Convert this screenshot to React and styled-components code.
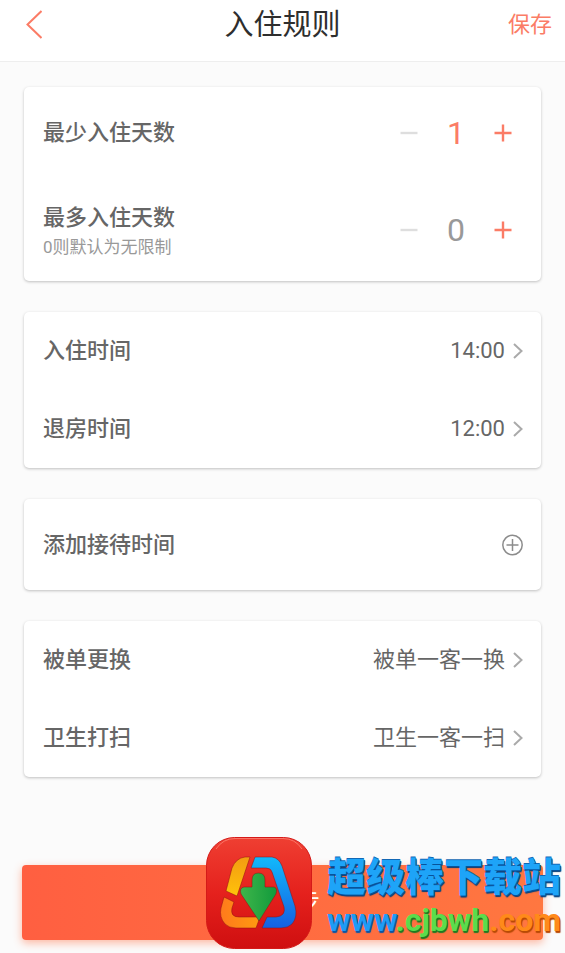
import React, { useState } from 'react';
import styled, { createGlobalStyle, ThemeProvider } from 'styled-components';

const theme = {
  accent: '#fb7c66',
  white: '#ffffff',
  background: '#fbfbfb',
  black: '#2e2e2e',
  text: '#666666',
  grey: '#999999',
  lightGrey: '#dedede',
  line: '#eeeeee',
  font: {
    family: "Roboto, 'Noto Sans CJK SC', sans-serif",
    size: { title: '29px', value: '32px', button: '25px', body: '22px', hint: '17px' },
  },
};

const GlobalStyle = createGlobalStyle`
  *, *::before, *::after {
    box-sizing: border-box;
  }

  body {
    margin: 0;
    background-color: ${theme.background};
  }

  button {
    padding: 0;
    border: 0;
    background: none;
    color: inherit;
    font: inherit;
    cursor: pointer;
  }
`;

const StyledPage = styled.div`
  overflow-x: hidden;
  font-family: ${({ theme }) => theme.font.family};
  font-size: ${({ theme }) => theme.font.size.body};
  line-height: 34px;
  color: ${({ theme }) => theme.text};
`;

const StyledHeader = styled.header`
  display: grid;
  grid-template-columns: 72px 1fr 72px;
  align-items: center;
  padding: 0 13px 11px;
  background-color: ${({ theme }) => theme.white};
  border-bottom: 1px solid ${({ theme }) => theme.line};
`;

const StyledTitle = styled.h1`
  margin: 0;
  font-size: ${({ theme }) => theme.font.size.title};
  font-weight: 400;
  line-height: 50px;
  text-align: center;
  color: ${({ theme }) => theme.black};
`;

const StyledHeaderButton = styled.button`
  display: flex;
  align-items: center;
  justify-content: ${({ $end }) => ($end ? 'flex-end' : 'flex-start')};
  height: 48px;
  color: ${({ theme }) => theme.accent};
`;

const StyledMain = styled.main`
  display: flex;
  flex-direction: column;
  gap: 31px;
  padding: 25px 24px 0;
`;

const StyledCard = styled.section`
  padding: 0 18px 0 19px;
  border-radius: 5px;
  background-color: ${({ theme }) => theme.white};
  box-shadow: 0 1px 3px rgba(0, 0, 0, 0.24);
`;

const StyledRow = styled.div`
  display: flex;
  align-items: center;
  justify-content: space-between;
  min-height: ${({ $size }) => ({ large: '103px', medium: '91px' })[$size] || '78px'};
`;

const StyledRowButton = styled(StyledRow).attrs({ as: 'button', type: 'button' })`
  width: 100%;
  text-align: left;
`;

const StyledLabel = styled.span`
  font-weight: 500;
`;

const StyledHint = styled.p`
  margin: 0;
  font-size: ${({ theme }) => theme.font.size.hint};
  line-height: 24px;
  color: ${({ theme }) => theme.grey};
`;

const StyledValue = styled.span`
  display: flex;
  align-items: center;
  gap: 8px;
`;

const StyledStepper = styled.div`
  display: flex;
  align-items: center;
`;

const StyledStepButton = styled.button`
  display: flex;
  align-items: center;
  justify-content: center;
  width: 40px;
  height: 44px;
  color: ${({ theme }) => theme.accent};

  &:disabled {
    color: ${({ theme }) => theme.lightGrey};
    cursor: default;
  }
`;

const StyledCount = styled.output`
  width: 54px;
  font-size: ${({ theme }) => theme.font.size.value};
  line-height: 44px;
  text-align: center;
  color: ${({ theme, $active }) => ($active ? theme.accent : theme.grey)};
`;

const StyledFooter = styled.footer`
  position: relative;
  margin-top: 88px;
  padding: 0 22px 13px;
`;

const StyledSubmit = styled.button`
  display: block;
  width: 100%;
  height: 75px;
  border-radius: 4px;
  background: linear-gradient(90deg, #ff5f41, #ff7740);
  box-shadow: 0 3px 8px rgba(255, 100, 50, 0.45);
  font-size: ${({ theme }) => theme.font.size.button};
  color: ${({ theme }) => theme.white};
`;

const StyledBadge = styled.div`
  position: absolute;
  top: -28px;
  right: 4px;
  display: flex;
  gap: 15px;
  pointer-events: none;
`;

const StyledBadgeText = styled.div`
  display: flex;
  flex-direction: column;
  padding-top: 14px;
  white-space: nowrap;
`;

const StyledBadgeName = styled.span`
  font-family: 'Noto Sans CJK SC', sans-serif;
  font-size: 39px;
  font-weight: 900;
  line-height: 46px;
  color: #1ea4f8;
  text-shadow: 1px 1px 0 #07539c, 0 -1px 0 #1268b5, 1px 2px 1px #063d76;
`;

const StyledBadgeUrl = styled.span`
  font-size: 32px;
  font-weight: 700;
  line-height: 46px;
`;

const StyledUrlPart = styled.span`
  color: ${({ $color }) => $color};
  text-shadow: 1px 1px 0 ${({ $edge }) => $edge}, 1px 2px 1px ${({ $edge }) => $edge};
`;

const ChevronIcon = () => (
  <svg width="10" height="16" viewBox="0 0 10 16" fill="none" stroke="#aaaaaa" strokeWidth="2">
    <path d="M1 1L8.5 8L1 15" />
  </svg>
);

const BackIcon = () => (
  <svg width="29" height="30" viewBox="0 0 29 30" fill="none" stroke="currentColor" strokeWidth="2">
    <path d="M28.5 1L14.5 14.5L28.5 28" />
  </svg>
);

const StepIcon = ({ plus }) => (
  <svg width="18" height="18" viewBox="0 0 18 18" fill="none" stroke="currentColor" strokeWidth="2.4">
    <path d={plus ? 'M0.5 9H17.5M9 0.5V17.5' : 'M0.5 9H17.5'} />
  </svg>
);

const AddIcon = () => (
  <svg width="22" height="22" viewBox="0 0 22 22" fill="none" stroke="#8c8c8c" strokeWidth="1.5">
    <circle cx="11.5" cy="11" r="9.7" />
    <path d="M5.5 11H17.5M11.5 5V17" />
  </svg>
);

const BadgeLogo = () => (
  <svg width="106" height="113" viewBox="0 0 106 113">
    <defs>
      <linearGradient id="tile" x1="0" y1="0" x2="0" y2="1">
        <stop offset="0" stopColor="#ef3f32" />
        <stop offset="0.5" stopColor="#e5211d" />
        <stop offset="1" stopColor="#cf0f10" />
      </linearGradient>
      <linearGradient id="yellow" x1="0" y1="0" x2="0" y2="1">
        <stop offset="0" stopColor="#f39c12" />
        <stop offset="1" stopColor="#ffc20a" />
      </linearGradient>
      <linearGradient id="orange" x1="0" y1="0" x2="1" y2="0">
        <stop offset="0" stopColor="#ff7a1c" />
        <stop offset="1" stopColor="#ff9a10" />
      </linearGradient>
      <linearGradient id="blue" x1="0" y1="0" x2="0" y2="1">
        <stop offset="0" stopColor="#12b9fb" />
        <stop offset="1" stopColor="#1560e2" />
      </linearGradient>
      <linearGradient id="green" x1="0" y1="0" x2="1" y2="0">
        <stop offset="0" stopColor="#3fb54a" />
        <stop offset="1" stopColor="#119a3c" />
      </linearGradient>
    </defs>
    <rect x="0.5" y="0.5" width="105" height="111" rx="28" fill="url(#tile)" stroke="#d51a18" />
    <path d="M10 12Q17 1.5 29 1.5H77Q89 1.5 96 12" fill="none" stroke="#ff8a7c" strokeOpacity="0.7" />
    <g stroke="#8f1010" strokeOpacity="0.5" strokeWidth="1">
      <path d="M44 20H39Q30 21 26 31L20 54L31 59L44 20Z" fill="url(#yellow)" />
      <path
        d="M18 60L15 71Q13 80 19 87Q23 91 30 91H50L54 80H33Q24 80 26 71L28 65Z"
        fill="url(#orange)"
      />
      <path
        d="M49 20H66Q73 21 76 29L89 69Q92 80 86 87Q82 91 75 91H56L61 80H70Q80 79 78 70L66 35Q65 31 60 31H45Z"
        fill="url(#blue)"
      />
      <path
        d="M46 43Q46 36 52.5 36Q59 36 59 43V50H68Q72 51 70 57L53 84L35 57Q33 51 38 50H46Z"
        fill="url(#green)"
      />
    </g>
  </svg>
);

const Stepper = ({ label, value, min, onChange }) => (
  <StyledStepper role="group" aria-label={label}>
    <StyledStepButton
      type="button"
      aria-label="减少"
      disabled={value <= min}
      onClick={() => onChange(value - 1)}
    >
      <StepIcon />
    </StyledStepButton>
    <StyledCount $active={value > 0}>{value}</StyledCount>
    <StyledStepButton type="button" aria-label="增加" onClick={() => onChange(value + 1)}>
      <StepIcon plus />
    </StyledStepButton>
  </StyledStepper>
);

const LinkRow = ({ label, value }) => (
  <StyledRowButton>
    <StyledLabel>{label}</StyledLabel>
    <StyledValue>
      {value}
      <ChevronIcon />
    </StyledValue>
  </StyledRowButton>
);

const App = () => {
  const [minDays, setMinDays] = useState(1);
  const [maxDays, setMaxDays] = useState(0);

  return (
    <ThemeProvider theme={theme}>
      <GlobalStyle />
      <StyledPage>
        <StyledHeader>
          <StyledHeaderButton type="button" aria-label="返回">
            <BackIcon />
          </StyledHeaderButton>
          <StyledTitle>入住规则</StyledTitle>
          <StyledHeaderButton type="button" $end>
            保存
          </StyledHeaderButton>
        </StyledHeader>
        <StyledMain>
          <StyledCard>
            <StyledRow $size="medium">
              <StyledLabel>最少入住天数</StyledLabel>
              <Stepper label="最少入住天数" value={minDays} min={1} onChange={setMinDays} />
            </StyledRow>
            <StyledRow $size="large">
              <div>
                <StyledLabel>最多入住天数</StyledLabel>
                <StyledHint>0则默认为无限制</StyledHint>
              </div>
              <Stepper label="最多入住天数" value={maxDays} min={0} onChange={setMaxDays} />
            </StyledRow>
          </StyledCard>
          <StyledCard>
            <LinkRow label="入住时间" value="14:00" />
            <LinkRow label="退房时间" value="12:00" />
          </StyledCard>
          <StyledCard>
            <StyledRowButton $size="medium">
              <StyledLabel>添加接待时间</StyledLabel>
              <AddIcon />
            </StyledRowButton>
          </StyledCard>
          <StyledCard>
            <LinkRow label="被单更换" value="被单一客一换" />
            <LinkRow label="卫生打扫" value="卫生一客一扫" />
          </StyledCard>
        </StyledMain>
        <StyledFooter>
          <StyledSubmit type="button">下一步</StyledSubmit>
          <StyledBadge>
            <BadgeLogo />
            <StyledBadgeText>
              <StyledBadgeName>超级棒下载站</StyledBadgeName>
              <StyledBadgeUrl>
                <StyledUrlPart $color="#1e9cf5" $edge="#0b55a5">www</StyledUrlPart>
                <StyledUrlPart $color="#5bdc4c" $edge="#1f7a22">.cjbwh</StyledUrlPart>
                <StyledUrlPart $color="#ff8a1a" $edge="#b84a05">.com</StyledUrlPart>
              </StyledBadgeUrl>
            </StyledBadgeText>
          </StyledBadge>
        </StyledFooter>
      </StyledPage>
    </ThemeProvider>
  );
};

export default App;
